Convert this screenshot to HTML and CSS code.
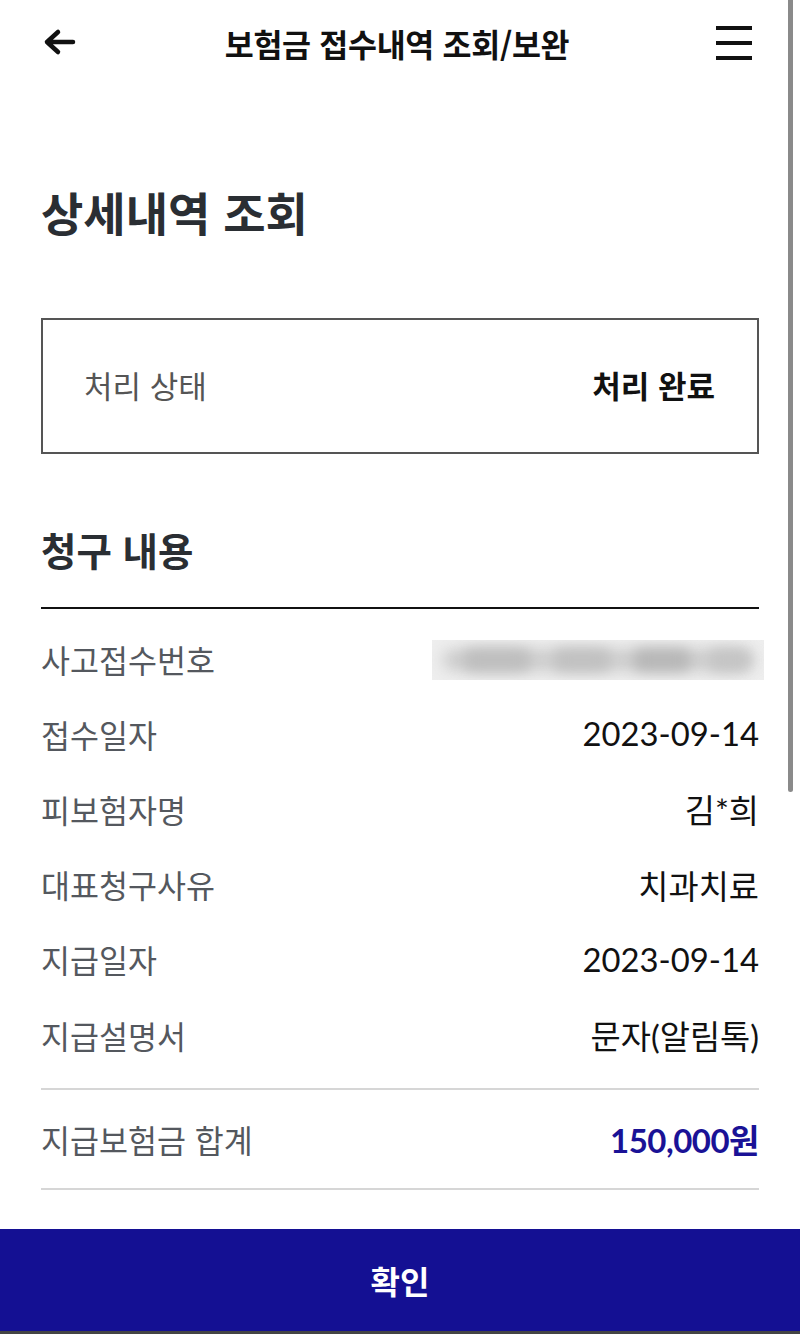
FILE: index.html
```html
<!DOCTYPE html>
<html lang="ko">
<head>
<meta charset="utf-8">
<title>보험금 접수내역 조회/보완</title>
<link rel="stylesheet" href="styles.css">
</head>
<body>
<div class="page">
  <header class="topbar">
    <span class="icon back">
      <svg width="34" height="28" viewBox="0 0 34 28"><path d="M16 4 L5 14 L16 24 M5 14 H31" fill="none" stroke="#111" stroke-width="4.5" stroke-linecap="round" stroke-linejoin="round"/></svg>
    </span>
    <h1 class="title">보험금 접수내역 조회/보완</h1>
    <span class="icon menu">
      <span class="bar"></span><span class="bar"></span><span class="bar"></span>
    </span>
  </header>

  <main class="content">
    <h2 class="page-title">상세내역 조회</h2>

    <div class="status-box">
      <span class="status-label">처리 상태</span>
      <span class="status-value">처리 완료</span>
    </div>

    <h3 class="section-title">청구 내용</h3>
    <div class="rule"></div>

    <ul class="rows">
      <li class="row"><span class="label">사고접수번호</span><span class="blurred"><span class="blob base"></span><span class="blob b1"></span><span class="blob b2"></span><span class="blob b3"></span><span class="blob b4"></span></span></li>
      <li class="row"><span class="label">접수일자</span><span class="value">2023-09-14</span></li>
      <li class="row"><span class="label">피보험자명</span><span class="value">김*희</span></li>
      <li class="row"><span class="label">대표청구사유</span><span class="value">치과치료</span></li>
      <li class="row"><span class="label">지급일자</span><span class="value">2023-09-14</span></li>
      <li class="row"><span class="label">지급설명서</span><span class="value">문자(알림톡)</span></li>
    </ul>

    <div class="total">
      <span class="label">지급보험금 합계</span>
      <span class="total-value">150,000원</span>
    </div>
  </main>

  <button class="confirm">확인</button>
  <div class="bottom-edge"></div>

  <div class="scrollbar"></div>
</div>
</body>
</html>
```

FILE: styles.css
```css
* { box-sizing: border-box; }
html, body { margin: 0; padding: 0; background: #fff; }
body {
  font-family: "Noto Sans CJK KR", "Noto Sans", sans-serif;
  color: #111;
}
.page {
  position: relative;
  width: 800px;
  height: 1334px;
  overflow: hidden;
  display: flex;
  flex-direction: column;
}
.topbar {
  height: 86px;
  display: flex;
  align-items: center;
  justify-content: space-between;
  padding: 0 48px 0 42px;
}
.icon { display: flex; }
.back { width: 36px; margin-top: -2px; }
.title {
  margin: 0;
  font-size: 31.5px;
  font-weight: 700;
  color: #111;
  letter-spacing: -0.3px;
}
.menu {
  width: 36px;
  flex-direction: column;
  gap: 11px;
}
.menu .bar {
  display: block;
  height: 4px;
  background: #111;
}
.content {
  padding: 0 41px;
  flex: 1;
}
.page-title {
  margin: 99px 0 0 0;
  font-size: 46px;
  line-height: 52px;
  font-weight: 700;
  color: #2a2e33;
}
.status-box {
  margin-top: 81px;
  height: 136px;
  border: 2px solid #555;
  display: flex;
  align-items: center;
  justify-content: space-between;
  padding: 0 42px 4px 41px;
}
.status-label {
  font-size: 31px;
  font-weight: 400;
  color: #555;
}
.status-value {
  font-size: 31px;
  font-weight: 700;
  color: #111;
}
.section-title {
  margin: 72px 0 0 0;
  font-size: 38.5px;
  line-height: 46px;
  font-weight: 700;
  color: #2a2e33;
}
.rule {
  margin-top: 35px;
  height: 2px;
  background: #111;
}
.rows {
  list-style: none;
  margin: 12px 0 0 0;
  padding: 0 0 16px 0;
  border-bottom: 2px solid #d6d6d6;
}
.row {
  height: 75.2px;
  display: flex;
  align-items: center;
  justify-content: space-between;
}
.label {
  font-size: 31.5px;
  color: #54585e;
}
.value {
  font-family: "Lato", "Noto Sans CJK KR", sans-serif;
  font-size: 32.8px;
  color: #111;
}
.blurred {
  position: relative;
  width: 332px;
  height: 40px;
  margin-right: -5px;
  margin-top: 2px;
  background: #eeeeee;
  overflow: hidden;
}
.blob {
  position: absolute;
  top: 9px;
  height: 22px;
  border-radius: 11px;
  background: #c8c8c8;
  filter: blur(7px);
}
.base { left: 10px; width: 310px; background: #cfcfcf; }
.b1 { left: 30px; width: 70px; background: #bdbdbd; }
.b2 { left: 120px; width: 60px; background: #c0c0c0; }
.b3 { left: 200px; width: 60px; background: #b6b6b6; }
.b4 { left: 275px; width: 45px; background: #c4c4c4; }
.total {
  height: 100px;
  display: flex;
  align-items: center;
  justify-content: space-between;
  border-bottom: 2px solid #d6d6d6;
}
.total-value {
  font-family: "Lato", "Noto Sans CJK KR", sans-serif;
  font-size: 33px;
  font-weight: 700;
  color: #1a1296;
  letter-spacing: -0.5px;
}
.confirm {
  height: 102px;
  width: 100%;
  border: 0;
  margin: 0;
  background: #141093;
  color: #fff;
  font-family: "Noto Sans CJK KR", sans-serif;
  font-size: 32px;
  font-weight: 700;
}
.bottom-edge {
  height: 3px;
  background: #444;
}
.scrollbar {
  position: absolute;
  top: 0;
  right: 7px;
  width: 5px;
  height: 792px;
  background: #8a8a8a;
  border-radius: 0 0 3px 3px;
}
```
